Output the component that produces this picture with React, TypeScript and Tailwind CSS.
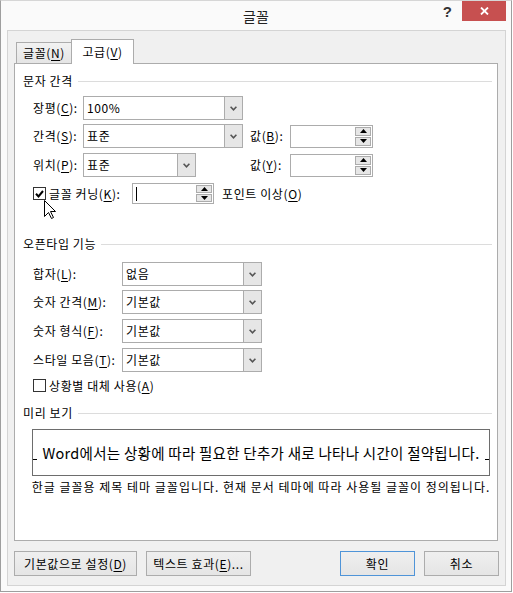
import React from "react";

const U = ({ children }: { children: React.ReactNode }) => (
  <span className="underline decoration-1 underline-offset-[2px]">{children}</span>
);

function Chevron() {
  return (
    <svg width="7" height="5" viewBox="0 0 7 5">
      <path d="M0.6 0.8 L3.5 3.8 L6.4 0.8" fill="none" stroke="#555" strokeWidth="1.6" />
    </svg>
  );
}

function Combo({ className, text }: { className: string; text: string }) {
  return (
    <div className={`flex h-[24px] shrink-0 border border-[#acacac] bg-white ${className}`}>
      <div className="flex flex-1 items-center pl-[3px] leading-[16px]">{text}</div>
      <div className="flex w-[18px] items-center justify-center border-l border-[#acacac] bg-[#e6e6e6]">
        <Chevron />
      </div>
    </div>
  );
}

function SpinBtn({ up }: { up: boolean }) {
  return (
    <div className="flex flex-1 items-center justify-center border border-[#acacac] bg-[#e6e6e6]">
      <svg width="7" height="4" viewBox="0 0 7 4">
        {up ? <polygon points="0,4 3.5,0 7,4" fill="#000" /> : <polygon points="0,0 3.5,4 7,0" fill="#000" />}
      </svg>
    </div>
  );
}

function Spin({ className, caret }: { className: string; caret?: boolean }) {
  return (
    <div className={`flex shrink-0 border border-[#acacac] bg-white ${className}`}>
      <div className="flex flex-1 items-center pl-[3px]">
        {caret && <div className="h-[14px] w-px bg-black" />}
      </div>
      <div className="flex w-[17px] flex-col gap-px py-px pr-px">
        <SpinBtn up />
        <SpinBtn up={false} />
      </div>
    </div>
  );
}

function Check({ checked }: { checked?: boolean }) {
  return (
    <div className="flex h-[13px] w-[13px] shrink-0 items-center justify-center border border-[#333] bg-white">
      {checked && (
        <svg width="9" height="8" viewBox="0 0 9 8">
          <path d="M1 3.8 L3.5 6.4 L8 1" fill="none" stroke="#000" strokeWidth="2" />
        </svg>
      )}
    </div>
  );
}

function Header({ text, className }: { text: string; className: string }) {
  return (
    <div className={`flex h-[16px] items-center pl-[8px] pr-[5px] ${className}`}>
      <span className="whitespace-nowrap">{text}</span>
      <div className="ml-[5px] h-px flex-1 bg-[#dcdcdc]" />
    </div>
  );
}

function Btn({ className, primary, children }: { className: string; primary?: boolean; children: React.ReactNode }) {
  return (
    <div
      className={`flex h-[25px] shrink-0 items-center justify-center whitespace-nowrap border bg-linear-to-b from-[#efefef] to-[#e5e5e5] ${
        primary ? "border-[#4f94d8]" : "border-[#acacac]"
      } ${className}`}
    >
      {children}
    </div>
  );
}

export default function App() {
  return (
    <div className="h-[593px] w-[513px] bg-white font-['Noto_Sans_CJK_KR',sans-serif] text-[12px] leading-[16px] tracking-[0.6px] text-black">
      <div className="relative flex h-[592px] w-[512px] flex-col border border-[#9e9e9e] border-t-[#d6d6d6] bg-[#fafafa]">
        {/* title bar */}
        <div className="grid h-[29px] shrink-0 grid-cols-[1fr_auto_1fr]">
          <div />
          <div className="self-center text-[14px] leading-[18px] tracking-normal text-[#222]">글꼴</div>
          <div className="flex justify-end">
            <div className="mt-[4px] font-['Liberation_Sans',sans-serif] text-[15px] font-bold leading-[14px] tracking-normal text-[#333]">?</div>
            <div className="ml-[10px] mr-[5px] flex h-[20px] w-[44px] items-center justify-center bg-[#c75050]">
              <svg width="9" height="8" viewBox="0 0 9 8">
                <path d="M1 0.5 L8 7.5 M8 0.5 L1 7.5" stroke="#fff" strokeWidth="1.8" />
              </svg>
            </div>
          </div>
        </div>

        {/* frame */}
        <div className="ml-[6px] flex h-[556px] w-[499px] shrink-0 flex-col border border-[#d4d4d4] bg-[#f0f0f0] pt-[8px]">
          {/* tabs */}
          <div className="relative z-10 -mb-px ml-[8px] flex h-[25px] items-end">
            <div className="mb-px flex h-[21px] w-[56px] items-center justify-center border border-b-0 border-[#acacac] bg-linear-to-b from-[#f2f2f2] to-[#e5e5e5]">
              글꼴(<U>N</U>)
            </div>
            <div className="-ml-px flex h-[25px] w-[63px] items-center justify-center border border-b-0 border-[#acacac] bg-white">
              고급(<U>V</U>)
            </div>
          </div>

          {/* panel */}
          <div className="ml-[6px] flex h-[478px] w-[484px] flex-col border border-[#acacac] bg-white">
            <Header text="문자 간격" className="mt-[9px]" />
            <div className="mt-[7px] flex h-[24px] items-center pl-[18px]">
              <div className="w-[50px] shrink-0 whitespace-nowrap">장평(<U>C</U>):</div>
              <Combo className="w-[160px]" text="100%" />
            </div>
            <div className="mt-[4px] flex h-[24px] items-center pl-[18px]">
              <div className="w-[50px] shrink-0 whitespace-nowrap">간격(<U>S</U>):</div>
              <Combo className="w-[160px]" text="표준" />
              <div className="ml-[7px] w-[40px] shrink-0 whitespace-nowrap">값(<U>B</U>):</div>
              <Spin className="h-[23px] w-[83px]" />
            </div>
            <div className="mt-[5px] flex h-[24px] items-center pl-[18px]">
              <div className="w-[50px] shrink-0 whitespace-nowrap">위치(<U>P</U>):</div>
              <div className="w-[160px] shrink-0">
                <Combo className="w-[113px]" text="표준" />
              </div>
              <div className="ml-[7px] w-[40px] shrink-0 whitespace-nowrap">값(<U>Y</U>):</div>
              <Spin className="h-[23px] w-[83px]" />
            </div>
            <div className="mt-[6px] flex h-[21px] items-center pl-[18px]">
              <Check checked />
              <div className="ml-[3px] w-[83px] shrink-0 whitespace-nowrap">글꼴 커닝(<U>K</U>):</div>
              <Spin className="h-[21px] w-[82px]" caret />
              <div className="ml-[8px] whitespace-nowrap">포인트 이상(<U>O</U>)</div>
            </div>

            <Header text="오픈타입 기능" className="mt-[32px]" />
            <div className="mt-[10px] flex h-[24px] items-center pl-[18px]">
              <div className="w-[89px] shrink-0 whitespace-nowrap">합자(<U>L</U>):</div>
              <Combo className="w-[140px]" text="없음" />
            </div>
            <div className="mt-[4px] flex h-[24px] items-center pl-[18px]">
              <div className="w-[89px] shrink-0 whitespace-nowrap">숫자 간격(<U>M</U>):</div>
              <Combo className="w-[140px]" text="기본값" />
            </div>
            <div className="mt-[5px] flex h-[24px] items-center pl-[18px]">
              <div className="w-[89px] shrink-0 whitespace-nowrap">숫자 형식(<U>F</U>):</div>
              <Combo className="w-[140px]" text="기본값" />
            </div>
            <div className="mt-[5px] flex h-[24px] items-center pl-[18px]">
              <div className="w-[89px] shrink-0 whitespace-nowrap">스타일 모음(<U>T</U>):</div>
              <Combo className="w-[140px]" text="기본값" />
            </div>
            <div className="mt-[5px] flex h-[17px] items-center pl-[18px]">
              <Check />
              <div className="ml-[3px] whitespace-nowrap">상황별 대체 사용(<U>A</U>)</div>
            </div>

            <Header text="미리 보기" className="mt-[11px]" />
            <div className="ml-[17px] mt-[8px] flex h-[47px] w-[458px] items-center justify-between border border-[#6d6d6d]">
              <div className="mt-[14px] h-px w-[4px] bg-black" />
              <div className="whitespace-nowrap text-[14.5px] leading-[20px] tracking-[0.27px]">
                Word에서는 상황에 따라 필요한 단추가 새로 나타나 시간이 절약됩니다.
              </div>
              <div className="mt-[14px] h-px w-[4px] bg-black" />
            </div>
            <div className="ml-[16px] mt-[3px] w-[460px] whitespace-nowrap text-center tracking-[1px]">
              한글 글꼴용 제목 테마 글꼴입니다. 현재 문서 테마에 따라 사용될 글꼴이 정의됩니다.
            </div>
          </div>

          {/* buttons */}
          <div className="ml-[6px] mt-[10px] flex h-[25px]">
            <Btn className="w-[123px]">기본값으로 설정(<U>D</U>)</Btn>
            <Btn className="ml-[9px] w-[105px]">텍스트 효과(<U>E</U>)...</Btn>
            <Btn className="ml-[89px] w-[75px]" primary>확인</Btn>
            <Btn className="ml-[9px] w-[75px]">취소</Btn>
          </div>
        </div>

        {/* mouse cursor */}
        <svg className="absolute left-[43px] top-[199px]" width="13" height="20" viewBox="0 0 13 20">
          <path d="M0.5 0.5 V16.5 L4.5 12.5 L7.5 18.5 L9.5 17.5 L6.5 11.5 H11.5 Z" fill="#fff" stroke="#000" strokeWidth="1" strokeLinejoin="miter" />
        </svg>
      </div>
    </div>
  );
}
